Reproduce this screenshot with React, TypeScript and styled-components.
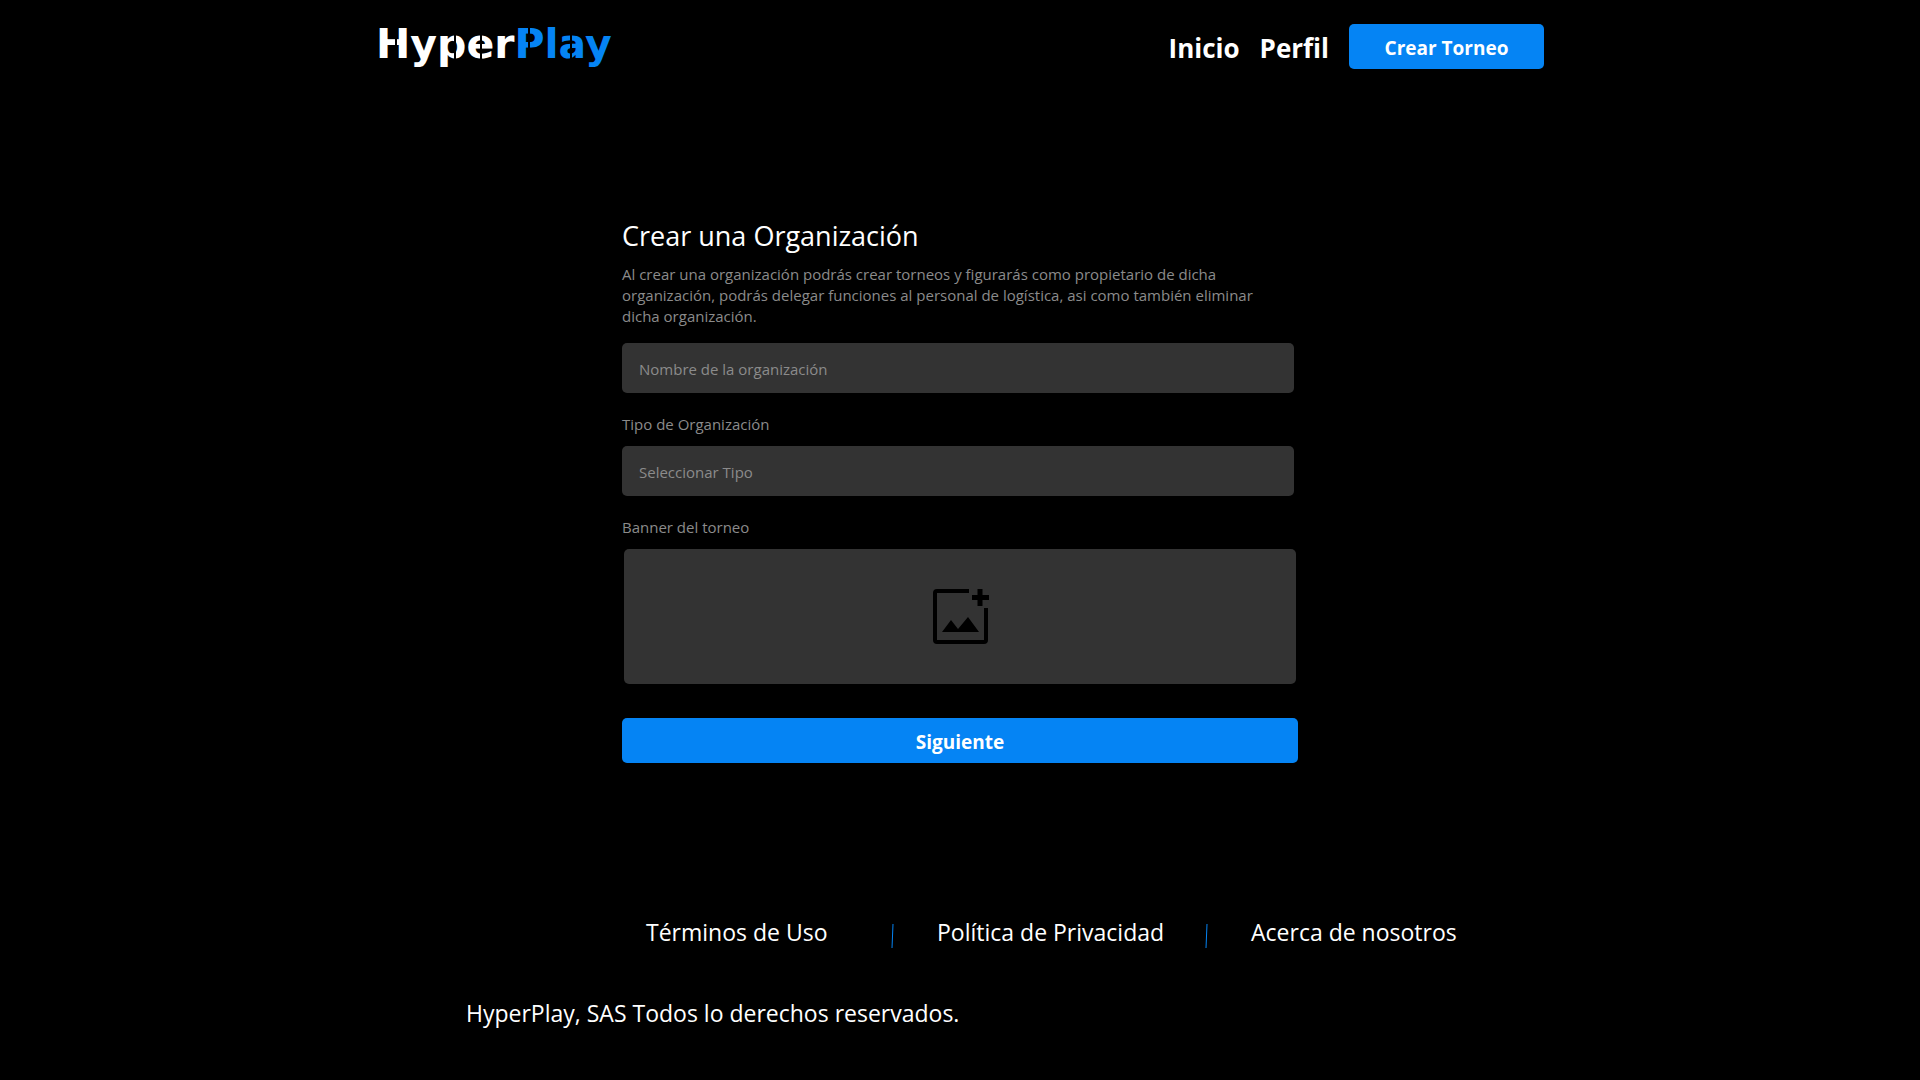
import React from "react";
import styled, { createGlobalStyle, css } from "styled-components";

const blue = "#0584f4";
const panel = "#333333";
const muted = "#8b8b8b";

const GlobalStyle = createGlobalStyle`
  *, *::before, *::after { box-sizing: border-box; }
  body {
    margin: 0;
    background: #000;
    color: #fff;
    font-family: "Segoe UI", "Open Sans", "Noto Sans", sans-serif;
  }
  button, input, select { font-family: inherit; }
`;

const Page = styled.div`
  display: flex;
  flex-direction: column;
  min-height: 100vh;
`;

const Header = styled.header`
  display: flex;
  align-items: flex-start;
  justify-content: space-between;
  width: 100%;
  max-width: 1168px;
  margin: 0 auto;
  padding-top: 24px;
`;

const Logo = styled.a`
  position: relative;
  color: #fff;
  font-family: "DejaVu Sans", sans-serif;
  font-size: 41px;
  font-weight: 700;
  line-height: 40px;
  text-decoration: none;
`;

const LogoAccent = styled.span`
  color: ${blue};
`;

const StencilCuts = styled.svg`
  position: absolute;
  top: 0;
  left: 0;
  pointer-events: none;
`;

const Nav = styled.nav`
  display: flex;
  align-items: center;
  gap: 20px;
`;

const NavLink = styled.a`
  padding-top: 3px;
  color: #fff;
  font-size: 26px;
  font-weight: 700;
  line-height: 42px;
  text-decoration: none;
`;

const Button = styled.button<{ $wide?: boolean }>`
  width: ${(p) => (p.$wide ? "100%" : "195px")};
  height: 45px;
  padding: 2px 0 0;
  border: 0;
  border-radius: 5px;
  background: ${blue};
  color: #fff;
  font-size: 19px;
  font-weight: 700;
  line-height: 24px;
  cursor: pointer;
`;

const Form = styled.form`
  display: flex;
  flex-direction: column;
  width: 100%;
  max-width: 676px;
  margin: 143px auto 0;
`;

const Title = styled.h1`
  margin: 0;
  font-size: 27px;
  font-weight: 400;
  line-height: 48px;
`;

const Intro = styled.p`
  margin: 4px 0 16px;
  padding-right: 32px;
  color: ${muted};
  font-size: 15px;
  line-height: 21px;
`;

const field = css`
  width: calc(100% - 4px);
  height: 50px;
  margin: 0;
  padding: 2px 17px 0;
  border: 0;
  border-radius: 5px;
  background: ${panel};
  color: ${muted};
  font-size: 15px;
`;

const TextInput = styled.input`
  ${field}
  &::placeholder { color: ${muted}; opacity: 1; }
`;

const Select = styled.select`
  ${field}
  appearance: none;
`;

const FieldLabel = styled.label`
  margin: 21px 0 11px;
  color: ${muted};
  font-size: 15px;
  line-height: 21px;
`;

const DropZone = styled.label`
  display: flex;
  align-items: center;
  justify-content: center;
  height: 135px;
  margin: 0 2px 34px;
  border-radius: 5px;
  background: ${panel};
  cursor: pointer;
`;

const FileInput = styled.input`
  position: absolute;
  width: 1px;
  height: 1px;
  opacity: 0;
`;

const Footer = styled.footer`
  width: 100%;
  max-width: 1168px;
  margin: 0 auto;
  padding: 152px 0 48px;
`;

const FooterNav = styled.nav`
  display: grid;
  grid-template-columns: 202px 3px 225px 3px auto;
  column-gap: 43px;
  align-items: center;
  margin-left: 270px;
`;

const FooterLink = styled.a`
  color: #fff;
  font-size: 23px;
  line-height: 34px;
  text-decoration: none;
  white-space: nowrap;
`;

const Copyright = styled.p`
  margin: 47px 0 0 90px;
  font-size: 23px;
  line-height: 34px;
`;

const Slash = () => (
  <svg width="3" height="34" viewBox="0 0 3 34" aria-hidden="true">
    <path d="M2 9L1 33" stroke={blue} strokeWidth="1" fill="none" />
  </svg>
);

const AddImageIcon = () => (
  <svg width="58" height="58" viewBox="0 0 58 58" aria-hidden="true">
    <path
      d="M38 3H6Q4 3 4 5V52Q4 54 6 54H53Q55 54 55 52V20"
      fill="none"
      stroke="#000"
      strokeWidth="4"
    />
    <path d="M49 1V18M41 9.500H58" fill="none" stroke="#000" strokeWidth="5" />
    <path d="M11 44L20 32L27 41L37 29L48 44Z" fill="#000" />
  </svg>
);

export default function App() {
  return (
    <Page>
      <GlobalStyle />
      <Header>
        <Logo href="#">
          Hyper<LogoAccent>Play</LogoAccent>
          <StencilCuts width="238" height="48" viewBox="0 0 232 48" aria-hidden="true">
            <path
              d="M17 4V36M76 8V36M102 8V36M150 4V36M192 8V36"
              stroke="#000"
              strokeWidth="2"
              fill="none"
            />
          </StencilCuts>
        </Logo>
        <Nav>
          <NavLink href="#">Inicio</NavLink>
          <NavLink href="#">Perfil</NavLink>
          <Button type="button">Crear Torneo</Button>
        </Nav>
      </Header>

      <Form>
        <Title>Crear una Organización</Title>
        <Intro>
          Al crear una organización podrás crear torneos y figurarás como
          propietario de dicha organización, podrás delegar funciones al
          personal de logística, asi como también eliminar dicha organización.
        </Intro>
        <TextInput
          type="text"
          aria-label="Nombre de la organización"
          placeholder="Nombre de la organización"
        />
        <FieldLabel htmlFor="tipo">Tipo de Organización</FieldLabel>
        <Select id="tipo">
          <option>Seleccionar Tipo</option>
        </Select>
        <FieldLabel htmlFor="banner">Banner del torneo</FieldLabel>
        <DropZone>
          <FileInput id="banner" type="file" accept="image/*" />
          <AddImageIcon />
        </DropZone>
        <Button type="button" $wide>
          Siguiente
        </Button>
      </Form>

      <Footer>
        <FooterNav>
          <FooterLink href="#">Términos de Uso</FooterLink>
          <Slash />
          <FooterLink href="#">Política de Privacidad</FooterLink>
          <Slash />
          <FooterLink href="#">Acerca de nosotros</FooterLink>
        </FooterNav>
        <Copyright>HyperPlay, SAS Todos lo derechos reservados.</Copyright>
      </Footer>
    </Page>
  );
}
